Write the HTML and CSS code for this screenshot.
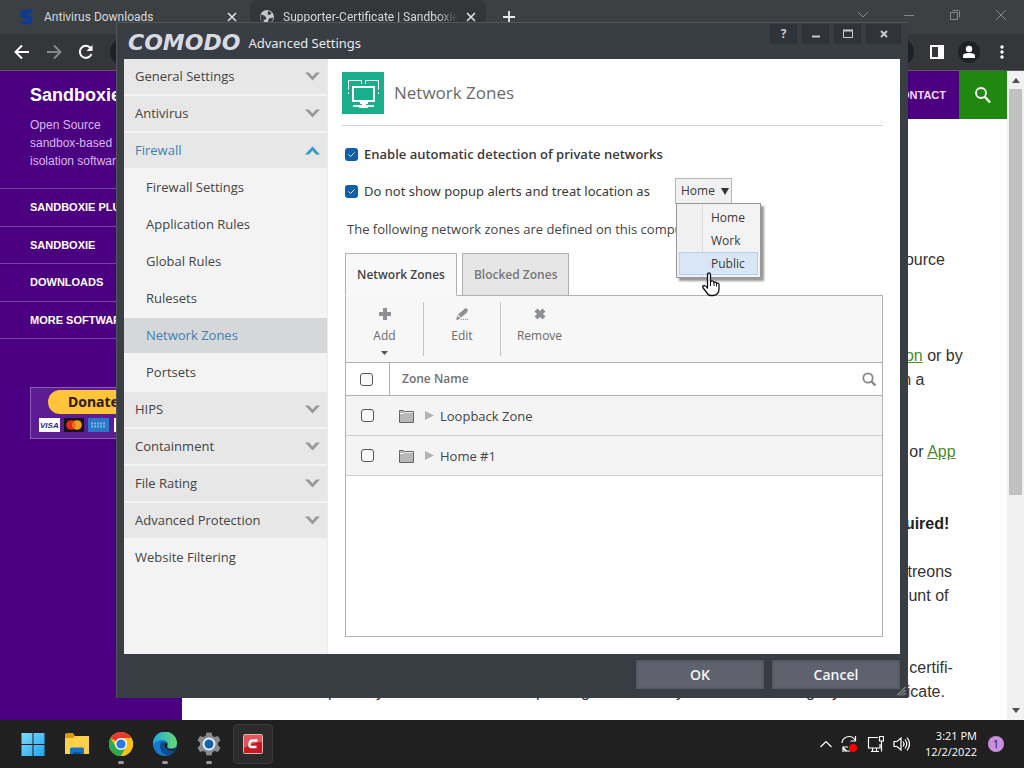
FILE: index.html
```html
<!DOCTYPE html>
<html lang="en">
<head>
<meta charset="utf-8">
<title>Advanced Settings - Network Zones</title>
<link rel="stylesheet" href="styles.css">
</head>
<body>
<div class="desktop">
  <div class="browser">
    <div class="tabstrip">
      <div class="tab">
        <svg class="tab-icon" width="16" height="16" viewBox="0 0 16 16"><path d="M13.500 2.500H6Q3.500 2.500 3.500 5Q3.500 7 6 7.500L10 8.500Q12 9 11.500 11Q11 13.500 8.500 13.500H2" fill="none" stroke="#0c3a94" stroke-width="4"/></svg>
        <span class="tab-title">Antivirus Downloads</span>
        <button class="icon-btn" aria-label="Close tab"><svg width="10" height="10" viewBox="0 0 10 10"><path d="M1 1l8 8M9 1l-8 8" stroke="#dfe1e5" stroke-width="1.600"/></svg></button>
      </div>
      <div class="tab tab-active">
        <svg class="tab-icon" width="16" height="16" viewBox="0 0 16 16"><circle cx="8" cy="8" r="7" fill="#c4c7cb"/><path d="M2 5.500Q6 6 7 8.500T4.500 11L5.500 14.500Q1 13 1.500 8zM9 2l3.500 1.500L11 6L8.500 5.500zM10 9.500l4-1Q14 13 10 14.500L9 12z" fill="#3a3c40"/></svg>
        <span class="tab-title">Supporter-Certificate | Sandboxie</span>
        <button class="icon-btn" aria-label="Close tab"><svg width="10" height="10" viewBox="0 0 10 10"><path d="M1 1l8 8M9 1l-8 8" stroke="#dfe1e5" stroke-width="1.600"/></svg></button>
      </div>
      <button class="icon-btn new-tab" aria-label="New tab"><svg width="12" height="12" viewBox="0 0 12 12"><path d="M6 0v12M0 6h12" stroke="#e8eaed" stroke-width="1.800"/></svg></button>
      <div class="window-controls">
        <button class="icon-btn" aria-label="Tab search"><svg width="12" height="12" viewBox="0 0 12 12"><path d="M1 3l5 5 5-5" fill="none" stroke="#84888c"/></svg></button>
        <button class="icon-btn" aria-label="Minimize"><svg width="12" height="12" viewBox="0 0 12 12"><path d="M1 6.500h10" stroke="#84888c"/></svg></button>
        <button class="icon-btn" aria-label="Restore"><svg width="12" height="12" viewBox="0 0 12 12"><path d="M3.500 1.500h6q1 0 1 1v6M1.500 3.500h7v7h-7z" fill="none" stroke="#84888c"/></svg></button>
        <button class="icon-btn" aria-label="Close"><svg width="12" height="12" viewBox="0 0 12 12"><path d="M1 1l10 10M11 1L1 11" stroke="#84888c"/></svg></button>
      </div>
    </div>
    <div class="navbar">
      <button class="icon-btn" aria-label="Back"><svg width="16" height="16" viewBox="0 0 16 16"><path d="M15 8H2M8 1.500L1.500 8L8 14.500" fill="none" stroke="#fff" stroke-width="2"/></svg></button>
      <button class="icon-btn" aria-label="Forward"><svg width="16" height="16" viewBox="0 0 16 16"><path d="M1 8h13M8 1.500L14.500 8L8 14.500" fill="none" stroke="#85878a" stroke-width="2"/></svg></button>
      <button class="icon-btn" aria-label="Reload"><svg width="16" height="16" viewBox="0 0 16 16"><path d="M13.500 10A6 6 0 1 1 12.500 4" fill="none" stroke="#fff" stroke-width="2"/><path d="M14.500 1v6h-6z" fill="#fff"/></svg></button>
      <div class="address"></div>
      <div class="nav-tools">
        <button class="icon-btn" aria-label="Side panel"><svg width="14" height="14" viewBox="0 0 14 14"><path d="M0 0h14v14H0zM2 2v10h6V2z" fill="#fff" fill-rule="evenodd"/></svg></button>
        <button class="icon-btn" aria-label="Profile"><svg width="22" height="22" viewBox="0 0 22 22"><circle cx="11" cy="11" r="11" fill="#202124"/><circle cx="11" cy="8" r="3.200" fill="#fff"/><path d="M5 17v-2.500Q5 12 11 12t6 2.500V17z" fill="#fff"/></svg></button>
        <button class="icon-btn more" aria-label="Menu"><svg width="4" height="14" viewBox="0 0 4 14"><circle cx="2" cy="2" r="1.700" fill="#fff"/><circle cx="2" cy="7" r="1.700" fill="#fff"/><circle cx="2" cy="12" r="1.700" fill="#fff"/></svg></button>
      </div>
    </div>
    <div class="page">
      <aside class="site-side">
        <h1 class="site-name">Sandboxie</h1>
        <p class="site-tag">Open Source<br>sandbox-based<br>isolation software</p>
        <nav class="site-menu">
          <a href="#">SANDBOXIE PLUS</a>
          <a href="#">SANDBOXIE</a>
          <a href="#">DOWNLOADS</a>
          <a href="#">MORE SOFTWARE</a>
        </nav>
        <button class="donate">
          <span class="donate-pill">Donate</span>
          <svg width="100" height="14" viewBox="0 0 100 14"><rect width="21" height="14" fill="#fff"/><text x="1" y="10" class="visa">VISA</text><rect x="25" width="20" height="14" fill="#151515"/><circle cx="32" cy="7" r="4.800" fill="#e8261b"/><circle cx="38" cy="7" r="4.800" fill="#f6a01b"/><path d="M35 3.200a4.800 4.800 0 0 1 0 7.600a4.800 4.800 0 0 1 0-7.600" fill="#f36b1e"/><rect x="49" width="21" height="14" fill="#2a78c8"/><path d="M52 5.500h15M52 8.500h15" stroke="#7fb2e2" stroke-width="2" stroke-dasharray="2 1"/><rect x="75" width="20" height="14" fill="#fff"/></svg>
        </button>
      </aside>
      <main class="site-main">
        <nav class="site-nav">
          <a class="site-link" href="#">CONTACT</a>
          <button class="site-search" aria-label="Search"><svg width="18" height="18" viewBox="0 0 18 18"><circle cx="7" cy="7" r="5" fill="none" stroke="#fff" stroke-width="1.800"/><path d="M10.500 10.500l5.500 6" stroke="#fff" stroke-width="2.400"/></svg></button>
        </nav>
        <div class="article">
          <p class="tail"><span>p</span><span>y</span><span>p</span><span>g</span><span>y</span><span>g</span><span>y</span></p>
          <div class="copy">
            <p class="lead">in source</p>
            <p class="wide">ca<a href="#">tion</a> or by<br>then a</p>
            <p class="wide">site or <a href="#">App</a></p>
            <p><b>required!</b></p>
            <p class="wide">l Patreons<br>iscount of</p>
            <p>this certifi-<br>dedicate.</p>
          </div>
        </div>
      </main>
      <div class="scrollbar">
        <svg width="8" height="5" viewBox="0 0 8 5"><path d="M0 5l4-5 4 5z" fill="#505050"/></svg>
        <div class="thumb"></div>
        <svg width="8" height="5" viewBox="0 0 8 5"><path d="M0 0l4 5 4-5z" fill="#505050"/></svg>
      </div>
    </div>
  </div>

  <div class="dialog" role="dialog" aria-label="Advanced Settings">
    <header class="dlg-head">
      <span class="brand">COMODO</span>
      <span class="dlg-title">Advanced Settings</span>
      <div class="dlg-controls">
        <button aria-label="Help">?</button>
        <button aria-label="Minimize"><svg width="12" height="12" viewBox="0 0 12 12"><path d="M2 8.500h8" stroke="#c8cacf" stroke-width="2"/></svg></button>
        <button aria-label="Maximize"><svg width="12" height="12" viewBox="0 0 12 12"><path d="M1.500 2v7.500h9V2" fill="none" stroke="#c8cacf"/><path d="M1 2.500h10" stroke="#c8cacf" stroke-width="2"/></svg></button>
        <button aria-label="Close"><svg width="12" height="12" viewBox="0 0 12 12"><path d="M3 3l6 6M9 3l-6 6" stroke="#c8cacf" stroke-width="2"/></svg></button>
      </div>
    </header>
    <div class="dlg-body">
      <nav class="menu">
        <a class="group" href="#">General Settings<svg width="15" height="9" viewBox="0 0 15 9"><path d="M0 0.500h4l3.500 4 3.500-4h4l-7.500 8z" fill="#999"/></svg></a>
        <a class="group" href="#">Antivirus<svg width="15" height="9" viewBox="0 0 15 9"><path d="M0 0.500h4l3.500 4 3.500-4h4l-7.500 8z" fill="#999"/></svg></a>
        <a class="group open" href="#">Firewall<svg width="15" height="9" viewBox="0 0 15 9"><path d="M0 8.500h4l3.500-4 3.500 4h4l-7.500-8z" fill="#2f9bd0"/></svg></a>
        <a class="sub" href="#">Firewall Settings</a>
        <a class="sub" href="#">Application Rules</a>
        <a class="sub" href="#">Global Rules</a>
        <a class="sub" href="#">Rulesets</a>
        <a class="sub selected" href="#">Network Zones</a>
        <a class="sub" href="#">Portsets</a>
        <a class="group" href="#">HIPS<svg width="15" height="9" viewBox="0 0 15 9"><path d="M0 0.500h4l3.500 4 3.500-4h4l-7.500 8z" fill="#999"/></svg></a>
        <a class="group" href="#">Containment<svg width="15" height="9" viewBox="0 0 15 9"><path d="M0 0.500h4l3.500 4 3.500-4h4l-7.500 8z" fill="#999"/></svg></a>
        <a class="group" href="#">File Rating<svg width="15" height="9" viewBox="0 0 15 9"><path d="M0 0.500h4l3.500 4 3.500-4h4l-7.500 8z" fill="#999"/></svg></a>
        <a class="group" href="#">Advanced Protection<svg width="15" height="9" viewBox="0 0 15 9"><path d="M0 0.500h4l3.500 4 3.500-4h4l-7.500 8z" fill="#999"/></svg></a>
        <a class="plain" href="#">Website Filtering</a>
      </nav>
      <section class="content">
        <div class="heading">
          <svg width="42" height="42" viewBox="0 0 42 42"><rect width="42" height="42" fill="#1bae8c"/><path d="M6.500 18V8.500h13V12M23.500 12V8.500h13V18" fill="none" stroke="#fff"/><path d="M6 20h1v2H6zM36 20h1v2h-1z" fill="#fff"/><rect x="11" y="15" width="21" height="14" fill="none" stroke="#fff" stroke-width="2"/><path d="M18 30h8v2h-2v1h8v2h-6v1h-9v-1h-6v-2h9v-1h-2z" fill="#fff"/></svg>
          <h2>Network Zones</h2>
        </div>
        <div class="form">
          <div class="option"><input class="check" type="checkbox" id="auto" checked><label for="auto"><b>Enable automatic detection of private networks</b></label></div>
          <div class="option"><input class="check" type="checkbox" id="popup" checked><label class="plain-label" for="popup">Do not show popup alerts and treat location as</label>
            <div class="picker">
              <select aria-label="Location"><option>Home</option><option>Work</option><option>Public</option></select>
              <div class="drop" role="listbox" aria-label="Location choices">
                <button role="option">Home</button>
                <button role="option">Work</button>
                <button role="option" class="hot">Public</button>
                <svg class="pointer" width="20" height="25" viewBox="0 0 20 25"><path d="M6.500 14V3q0-2 1.500-2t1.500 2v6.500q3-1.500 3.500 1 2-1 2.500.8 2.500-.8 2.500 1.700v4q0 6-6 6.500H10Q7 23.500 6 21L1.800 15.500Q1.500 13.500 3.500 13.500q1.500.5 3 2.500z" fill="#fff" stroke="#111" stroke-width="1.300" stroke-linejoin="round"/><path d="M9.500 9.500v4.500M13 10.500v3.500M15.500 11.500v3" stroke="#111" fill="none"/></svg>
              </div>
            </div>
          </div>
          <p class="note">The following network zones are defined on this computer</p>
          <div class="tabs" role="tablist">
            <button role="tab" class="on">Network Zones</button>
            <button role="tab">Blocked Zones</button>
          </div>
          <div class="panel">
            <div class="tools">
              <button><svg width="14" height="14" viewBox="0 0 14 14"><path d="M5 1h4v4h4v4H9v4H5V9H1V5h4z" fill="#8d9196"/></svg><span>Add</span><svg class="caret" width="7" height="4" viewBox="0 0 7 4"><path d="M0 0h7l-3.500 4z" fill="#555"/></svg></button>
              <button><svg width="14" height="14" viewBox="0 0 14 14"><path d="M10.500 1l2.500 1.500-1 3-6 5-3-3zM2.500 8.500l2.500 2.500-1 1.500-3 .500z" fill="#8d9196"/><path d="M6 12.500h7" stroke="#8d9196" stroke-dasharray="1 1"/></svg><span>Edit</span></button>
              <button><svg width="14" height="14" viewBox="0 0 14 14"><path d="M3 3l8 8M11 3l-8 8" stroke="#8d9196" stroke-width="4.200"/></svg><span>Remove</span></button>
            </div>
            <table class="zones">
              <thead><tr><th class="tick"><input class="box" type="checkbox" aria-label="Select all"></th><th><div class="cell head">Zone Name<button class="icon-btn" aria-label="Search zones"><svg width="14" height="14" viewBox="0 0 14 14"><circle cx="6" cy="6" r="4.700" fill="none" stroke="#85898c" stroke-width="1.800"/><path d="M9.500 9.500l4 4" stroke="#85898c" stroke-width="2.400"/></svg></button></div></th></tr></thead>
              <tbody>
                <tr><td class="tick"><input class="box" type="checkbox" aria-label="Loopback Zone"></td><td><div class="cell"><svg width="15" height="14" viewBox="0 0 15 14"><path d="M.5 13.500V1.500h4l1 1h9v11z" fill="#b9b9b9" stroke="#666"/><path d="M1 4.500h4l1-1h8" fill="none" stroke="#eee"/></svg><svg class="tri" width="9" height="9" viewBox="0 0 9 9"><path d="M0 0l9 4.500L0 9z" fill="#b4b4b4"/></svg>Loopback Zone</div></td></tr>
                <tr><td class="tick"><input class="box" type="checkbox" aria-label="Home #1"></td><td><div class="cell"><svg width="15" height="14" viewBox="0 0 15 14"><path d="M.5 13.500V1.500h4l1 1h9v11z" fill="#b9b9b9" stroke="#666"/><path d="M1 4.500h4l1-1h8" fill="none" stroke="#eee"/></svg><svg class="tri" width="9" height="9" viewBox="0 0 9 9"><path d="M0 0l9 4.500L0 9z" fill="#b4b4b4"/></svg>Home #1</div></td></tr>
              </tbody>
            </table>
          </div>
        </div>
      </section>
    </div>
    <footer class="dlg-foot">
      <button>OK</button>
      <button>Cancel</button>
    </footer>
    <svg class="grip" width="9" height="9" viewBox="0 0 9 9"><path d="M0 8.500L8.500 0M3 8.500L8.500 3M6 8.500L8.500 6" stroke="#b9bbc0"/></svg>
  </div>

  <footer class="taskbar">
    <div class="apps">
      <button aria-label="Start"><svg width="24" height="24" viewBox="0 0 24 24"><defs><linearGradient id="win" x2="1" y2="1"><stop stop-color="#7fdcff"/><stop offset="1" stop-color="#1ea5ee"/></linearGradient></defs><path d="M0.500 1H11.500V12H0.500zM12.500 1H23.500V12H12.500zM0.500 13H11.500V24H0.500zM12.500 13H23.500V24H12.500z" fill="url(#win)"/></svg></button>
      <button aria-label="File Explorer"><svg width="26" height="24" viewBox="0 0 26 24"><path d="M1 3q0-2 2-2h6l2 3v4H1z" fill="#d69a15"/><path d="M1 6h8l2-2h14v18H1z" fill="#fbd04b"/><path d="M6 22v-5q0-1.500 1.500-1.500h11q1.500 0 1.500 1.500v5z" fill="#1573c4"/><path d="M9 22v-2h8v2z" fill="#0b5499"/></svg></button>
      <button class="running" aria-label="Chrome"><svg width="24" height="24" viewBox="0 0 24 24"><circle cx="12" cy="12" r="12" fill="#fbc116"/><path d="M12 12L1.600 6A12 12 0 0 1 22.400 6H12z" fill="#e33b2e"/><path d="M1.600 6A12 12 0 0 0 12 24l5.200-9L12 12 6.800 15z" fill="#2da94f"/><path d="M22.400 6H12l5.200 9L12 24A12 12 0 0 0 22.400 6" fill="#fbc116"/><circle cx="12" cy="12" r="6" fill="#fff"/><circle cx="12" cy="12" r="4.600" fill="#2b78e4"/></svg></button>
      <button class="running" aria-label="Edge"><svg width="24" height="24" viewBox="0 0 24 24"><defs><linearGradient id="edge" x2="1"><stop stop-color="#21a6e0"/><stop offset="1" stop-color="#66dc6b"/></linearGradient></defs><circle cx="12" cy="12" r="12" fill="#1679c9"/><path d="M0 12A12 12 0 0 1 24 11q0 5-5.500 5.500Q14 16.500 14 14q2-2 0-4.500Q11 7 6 8.500Q1 10 0 14z" fill="url(#edge)"/><path d="M9 9.500Q6 12 7.500 17T15 23.500Q20 22.500 22 18Q16 20 13 17Q10.500 14 12 10.500z" fill="#0c4a93"/><path d="M12.500 10.500q3 1.500 1.500 4 0 2.500 5 2.500l4-1-1 2.500q-7 1-9.500-2.500t0-5.500" fill="#202020"/></svg></button>
      <button class="running" aria-label="Settings"><svg width="24" height="24" viewBox="0 0 24 24"><path d="M9.500 0.500h5l1 3.500 2 1 3.500-1 2.500 4.300-2.500 2.500v2.400l2.500 2.500L21 20l-3.500-1-2 1-1 3.500h-5l-1-3.500-2-1L3 20 .500 15.700 3 13.200v-2.400L.500 8.300 3 4l3.500 1 2-1z" fill="#858a90"/><circle cx="12" cy="12" r="6.500" fill="#e9f2fa"/><circle cx="12" cy="12" r="4.500" fill="#1463a8"/></svg></button>
      <button class="current" aria-label="Comodo"><svg width="20" height="20" viewBox="0 0 20 20"><rect x=".5" y=".5" width="19" height="19" rx="1" fill="#c9181f" stroke="#d9b7b7"/><path d="M1 1h18v7Q10 8 1 14z" fill="#e4545a"/><path d="M14.500 6.500H9.500Q7 6.500 6.500 10T9 13h4.500" fill="none" stroke="#fff" stroke-width="2.400"/></svg></button>
    </div>
    <div class="tray">
      <svg width="12" height="8" viewBox="0 0 12 8"><path d="M.5 7L6 1.500 11.500 7" fill="none" stroke="#fff" stroke-width="1.200"/></svg>
      <svg width="17" height="18" viewBox="0 0 17 18"><path d="M1 8A7 7 0 0 1 14 5M14.500 1v5h-5M9 16H3M2 17v-5h5M2 12.500l4 4" fill="none" stroke="#fff" stroke-width="1.200"/><circle cx="12" cy="13" r="4" fill="#f00"/></svg>
      <svg width="17" height="18" viewBox="0 0 17 18"><path d="M11 2.500H1.500v10.500H13V9M4 16.500h8M5.500 13v3M9.500 13v3M12.500 1.500h4V6h-4zM14.500 6v10.500" fill="none" stroke="#fff" stroke-width="1.200"/></svg>
      <svg width="17" height="16" viewBox="0 0 17 16"><path d="M1 5.500h3L8 2v12l-4-3.500H1zM10 5.500q2 2.500 0 5M12 3.500q3.500 4.500 0 9M14 1.500q5 6.500 0 13" fill="none" stroke="#fff" stroke-width="1.200"/></svg>
      <div class="clock"><span>3:21 PM</span><span>12/2/2022</span></div>
      <span class="badge">1</span>
    </div>
  </footer>
</div>
</body>
</html>
```

FILE: styles.css
```css
* { box-sizing: border-box; }
body { margin: 0; font: 13px/18px "Open Sans", "Noto Sans", sans-serif; color: #444; }
button { font: inherit; color: inherit; border: 0; padding: 0; background: none; }
p, h1, h2 { margin: 0; }
a { color: inherit; text-decoration: none; }
svg { flex: none; display: block; }

.desktop { position: relative; height: 100vh; min-height: 600px; display: flex; flex-direction: column; overflow: hidden; }
.browser { flex: 1; min-height: 0; display: flex; flex-direction: column; background: #fff; }
.icon-btn { display: flex; align-items: center; justify-content: center; }

.tabstrip { display: flex; align-items: center; height: 34px; background: #3c4043; color: #d5d7da; font: 12px/18px Roboto, "Noto Sans", sans-serif; }
.tab { display: flex; align-items: center; height: 34px; width: 250px; padding: 0 13px 0 19px; gap: 9px; }
.tab-active { width: 236px; padding: 0 10px 0 9px; gap: 8px; background: #35363a; border-radius: 8px 8px 0 0; }
.tab-title { flex: 1; min-width: 0; overflow: hidden; white-space: nowrap; }
.tab-active .tab-title { -webkit-mask-image: linear-gradient(90deg, #000 88%, transparent); mask-image: linear-gradient(90deg, #000 88%, transparent); }
.new-tab { margin-left: 17px; }
.window-controls { display: flex; gap: 34px; margin-left: auto; padding: 0 17px 5px 0; }

.navbar { display: flex; align-items: center; gap: 16px; height: 37px; padding: 0 20px 0 14px; background: #35363a; border-bottom: 1px solid #5a5b60; }
.address { flex: 1; height: 28px; border-radius: 14px; background: #202124; }
.nav-tools { display: flex; align-items: center; gap: 14px; }
.more { margin-left: 6px; }

.page { flex: 1; min-height: 0; display: flex; background: #fff; font-family: "Liberation Sans", Arial, sans-serif; }
.site-side { flex: none; width: 182px; background: #4b0082; color: #fff; overflow: hidden; padding-top: 12px; }
.site-name { padding-left: 30px; font-size: 18px; line-height: 24px; }
.site-tag { padding: 9px 0 18px 30px; color: #d8b8ec; font-size: 12px; line-height: 18px; }
.site-menu { display: flex; flex-direction: column; height: 151px; border-top: 1px solid #7a42a5; margin-bottom: 48px; font-size: 11px; font-weight: bold; }
.site-menu a { flex: 1; display: flex; align-items: center; padding-left: 30px; border-bottom: 1px solid #7a42a5; }
.donate { display: flex; flex-direction: column; align-items: flex-start; gap: 4px; margin-left: 30px; width: 134px; height: 52px; padding: 2px 8px 3px; border: 1px solid #8b5cb5; background: #5b1d91; }
.donate-pill { align-self: center; width: 98px; height: 24px; border-radius: 12px; background: #ffc43a; color: #2c1a05; font: bold 14px/24px "Noto Sans", sans-serif; padding-left: 20px; text-align: left; }
.visa { font: italic bold 8px "Liberation Sans", sans-serif; fill: #1a2b7a; }
.site-main { flex: 1; min-width: 0; display: flex; flex-direction: column; }
.site-nav { display: flex; justify-content: flex-end; align-items: center; flex: none; height: 48px; background: #4b0082; color: #f3d9ff; font-size: 11px; font-weight: bold; }
.site-link { padding-right: 13px; }
.site-search { display: flex; align-items: center; justify-content: center; width: 48px; height: 48px; background: #20870f; }
.article { flex: 1; display: flex; justify-content: space-between; color: #333; font-size: 16px; line-height: 24px; min-height: 0; }
.tail { display: grid; grid-template-columns: 48px 160px 45px 95px 130px 26px 9px; align-self: flex-end; padding: 0 0 16px 146px; }
.copy { flex: none; width: 127px; padding-top: 129px; white-space: nowrap; }
.copy p { margin-bottom: 24px; }
.copy .wide { margin-bottom: 48px; }
.copy .lead { margin-bottom: 72px; }
.copy a { color: #4a8a2a; text-decoration: underline; }
.copy b { color: #222; }
.scrollbar { flex: none; width: 17px; display: flex; flex-direction: column; align-items: center; gap: 6px; padding: 7px 0; background: #f1f1f1; }
.thumb { width: 13px; flex: 0 1 64%; background: #c1c1c1; margin-bottom: auto; }

.dialog { position: absolute; inset: 22px 116px 70px; display: flex; flex-direction: column; padding: 0 8px 9px 7px; background: #393d44; border: 1px solid #53565b; border-width: 1px 0 0 1px; }
.dlg-head { display: flex; align-items: center; gap: 8px; height: 36px; color: #e8e9ec; }
.brand { padding: 3px 0 0 4px; font: italic bold 22px/24px "DejaVu Sans", sans-serif; color: #d8dae3; }
.dlg-title { padding-top: 4px; font-family: "Noto Sans", sans-serif; }
.dlg-controls { display: flex; align-self: flex-start; gap: 5px; margin: 1px -1px 0 auto; }
.dlg-controls button { display: flex; align-items: center; justify-content: center; width: 27px; height: 20px; background: #30343a; color: #c8cacf; font-size: 12px; font-weight: bold; }
.dlg-controls button:last-child { width: 35px; }
.dlg-body { flex: 1; min-height: 0; display: flex; background: #fff; }
.menu { flex: none; width: 204px; display: flex; flex-direction: column; gap: 2px; background: #f3f3f3; border-right: 1px solid #ebebeb; }
.menu a { display: flex; align-items: center; justify-content: space-between; height: 35px; padding: 0 7px 2px 11px; }
.menu svg { margin-top: 2px; }
.menu .group { background: #e7e7e7; }
.menu .open { color: #3f7fb4; }
.menu .sub { padding-left: 22px; }
.menu .selected { background: #d5d7d8; color: #3f7fb4; }

.content { flex: 1; min-width: 0; display: flex; flex-direction: column; padding: 13px 17px 17px 14px; }
.heading { display: flex; align-items: center; gap: 10px; padding-bottom: 11px; border-bottom: 1px solid #d2d2d2; }
.heading h2 { font-size: 17px; font-weight: 400; line-height: 24px; color: #6a6a6a; }
.form { flex: 1; min-height: 0; display: flex; flex-direction: column; padding: 15px 0 0 3px; }
.option { display: flex; align-items: center; gap: 6px; height: 26px; margin-bottom: 11px; color: #3a3a3a; }
.option b { font-weight: 600; }
.plain-label { font-family: "Noto Sans", sans-serif; }
.check { appearance: none; margin: 0; width: 13px; height: 13px; border-radius: 3px; background: #0f5fa8 url("data:image/svg+xml,%3Csvg xmlns='http://www.w3.org/2000/svg' viewBox='0 0 13 13'%3E%3Cpath d='M3.500 6.500l2 2 4-4' fill='none' stroke='white'/%3E%3C/svg%3E"); }
.picker { position: relative; margin-left: auto; margin-right: 151px; }
.picker select { appearance: none; display: block; width: 57px; height: 26px; padding: 0 0 0 5px; border: 1px solid #b5b5b5; border-radius: 0; font: inherit; font-size: 12px; color: #3a3a3a; background: #f1f1f1 url("data:image/svg+xml,%3Csvg xmlns='http://www.w3.org/2000/svg' viewBox='0 0 8 7'%3E%3Cpath d='M0 0h8l-4 7z' fill='%23333'/%3E%3C/svg%3E") no-repeat right 2px center / 8px 7px; }
.drop { position: absolute; z-index: 2; top: 25px; left: 1px; width: 85px; padding: 2px; display: flex; flex-direction: column; border: 1px solid #979797; background: linear-gradient(90deg, #f1f1f1 25px, #dcdcdc 25px, #dcdcdc 26px, #f3f3f3 26px); box-shadow: 3px 3px 2px #999; }
.drop button { height: 23px; padding-left: 31px; text-align: left; border: 1px solid transparent; font-size: 12px; line-height: 20px; }
.drop .hot { border-color: #aecff7; background: #d9e6f6; }
.pointer { position: absolute; left: 24px; top: 68px; }
.note { padding: 5px 0 15px 2px; }
.tabs { display: flex; gap: 5px; margin-bottom: -1px; position: relative; }
.tabs button { height: 43px; padding: 0 11px; border: 1px solid #b0b0b0; background: #e6e6e6; font-size: 12px; font-weight: 600; color: #777; }
.tabs .on { background: #f8f8f8; border-bottom-color: #f8f8f8; color: #444; }
.panel { flex: 1; min-height: 0; border: 1px solid #b0b0b0; background: #fff; }
.tools { display: flex; height: 67px; padding: 6px 0; background: #f7f7f7; border-bottom: 1px solid #b0b0b0; color: #6a6a6a; font-size: 12px; }
.tools button { display: flex; flex-direction: column; align-items: center; gap: 6px; width: 78px; padding-top: 5px; border-right: 1px solid #c5c5c5; }
.tools button + button { width: 77px; }
.tools button:last-child { border: 0; }
.zones { width: 100%; border-collapse: separate; border-spacing: 0; text-align: left; }
.zones th { height: 33px; padding: 0; border-bottom: 1px solid #b0b0b0; font-size: 12px; font-weight: 600; color: #707070; }
.zones td { height: 40px; padding: 0; background: #f4f4f4; border-bottom: 1px solid #d0d0d0; }
.zones .tick { width: 44px; padding-left: 15px; }
.zones th.tick { padding-left: 14px; border-right: 1px solid #b0b0b0; }
.box { appearance: none; display: block; margin: 0; width: 13px; height: 13px; border: 1px solid #555; border-radius: 3px; background: #f9f9f9; }
.cell { display: flex; align-items: center; padding: 0 6px 0 9px; }
.head { justify-content: space-between; padding-left: 12px; }
.tri { margin: 0 6px 0 11px; }
.dlg-foot { display: flex; justify-content: flex-end; gap: 8px; padding-top: 6px; }
.dlg-foot button { width: 128px; height: 29px; background: #5f626d; box-shadow: inset 0 0 3px #474a53; color: #f5f5f8; font-size: 14px; font-weight: 600; }
.grip { position: absolute; right: 2px; bottom: 2px; }

.taskbar { flex: none; display: flex; justify-content: space-between; align-items: center; height: 48px; padding: 0 20px 0 13px; background: #202020; color: #fff; }
.apps { display: flex; gap: 4px; }
.apps button { position: relative; display: flex; align-items: center; justify-content: center; width: 40px; height: 40px; border-radius: 4px; }
.apps .current { background: #2b2b2b; border: 1px solid #3b3b3b; }
.running::after { content: ""; position: absolute; left: 17px; bottom: 0; width: 6px; height: 3px; border-radius: 2px; background: #9a9a9a; }
.tray { display: flex; align-items: center; gap: 9px; }
.clock { display: flex; flex-direction: column; align-items: flex-end; margin-left: 6px; font-size: 11px; line-height: 16px; }
.badge { width: 16px; height: 16px; margin: 0 0 0 2px; border-radius: 50%; background: #c88fdc; color: #2b1433; font-size: 11px; line-height: 16px; text-align: center; }
```
